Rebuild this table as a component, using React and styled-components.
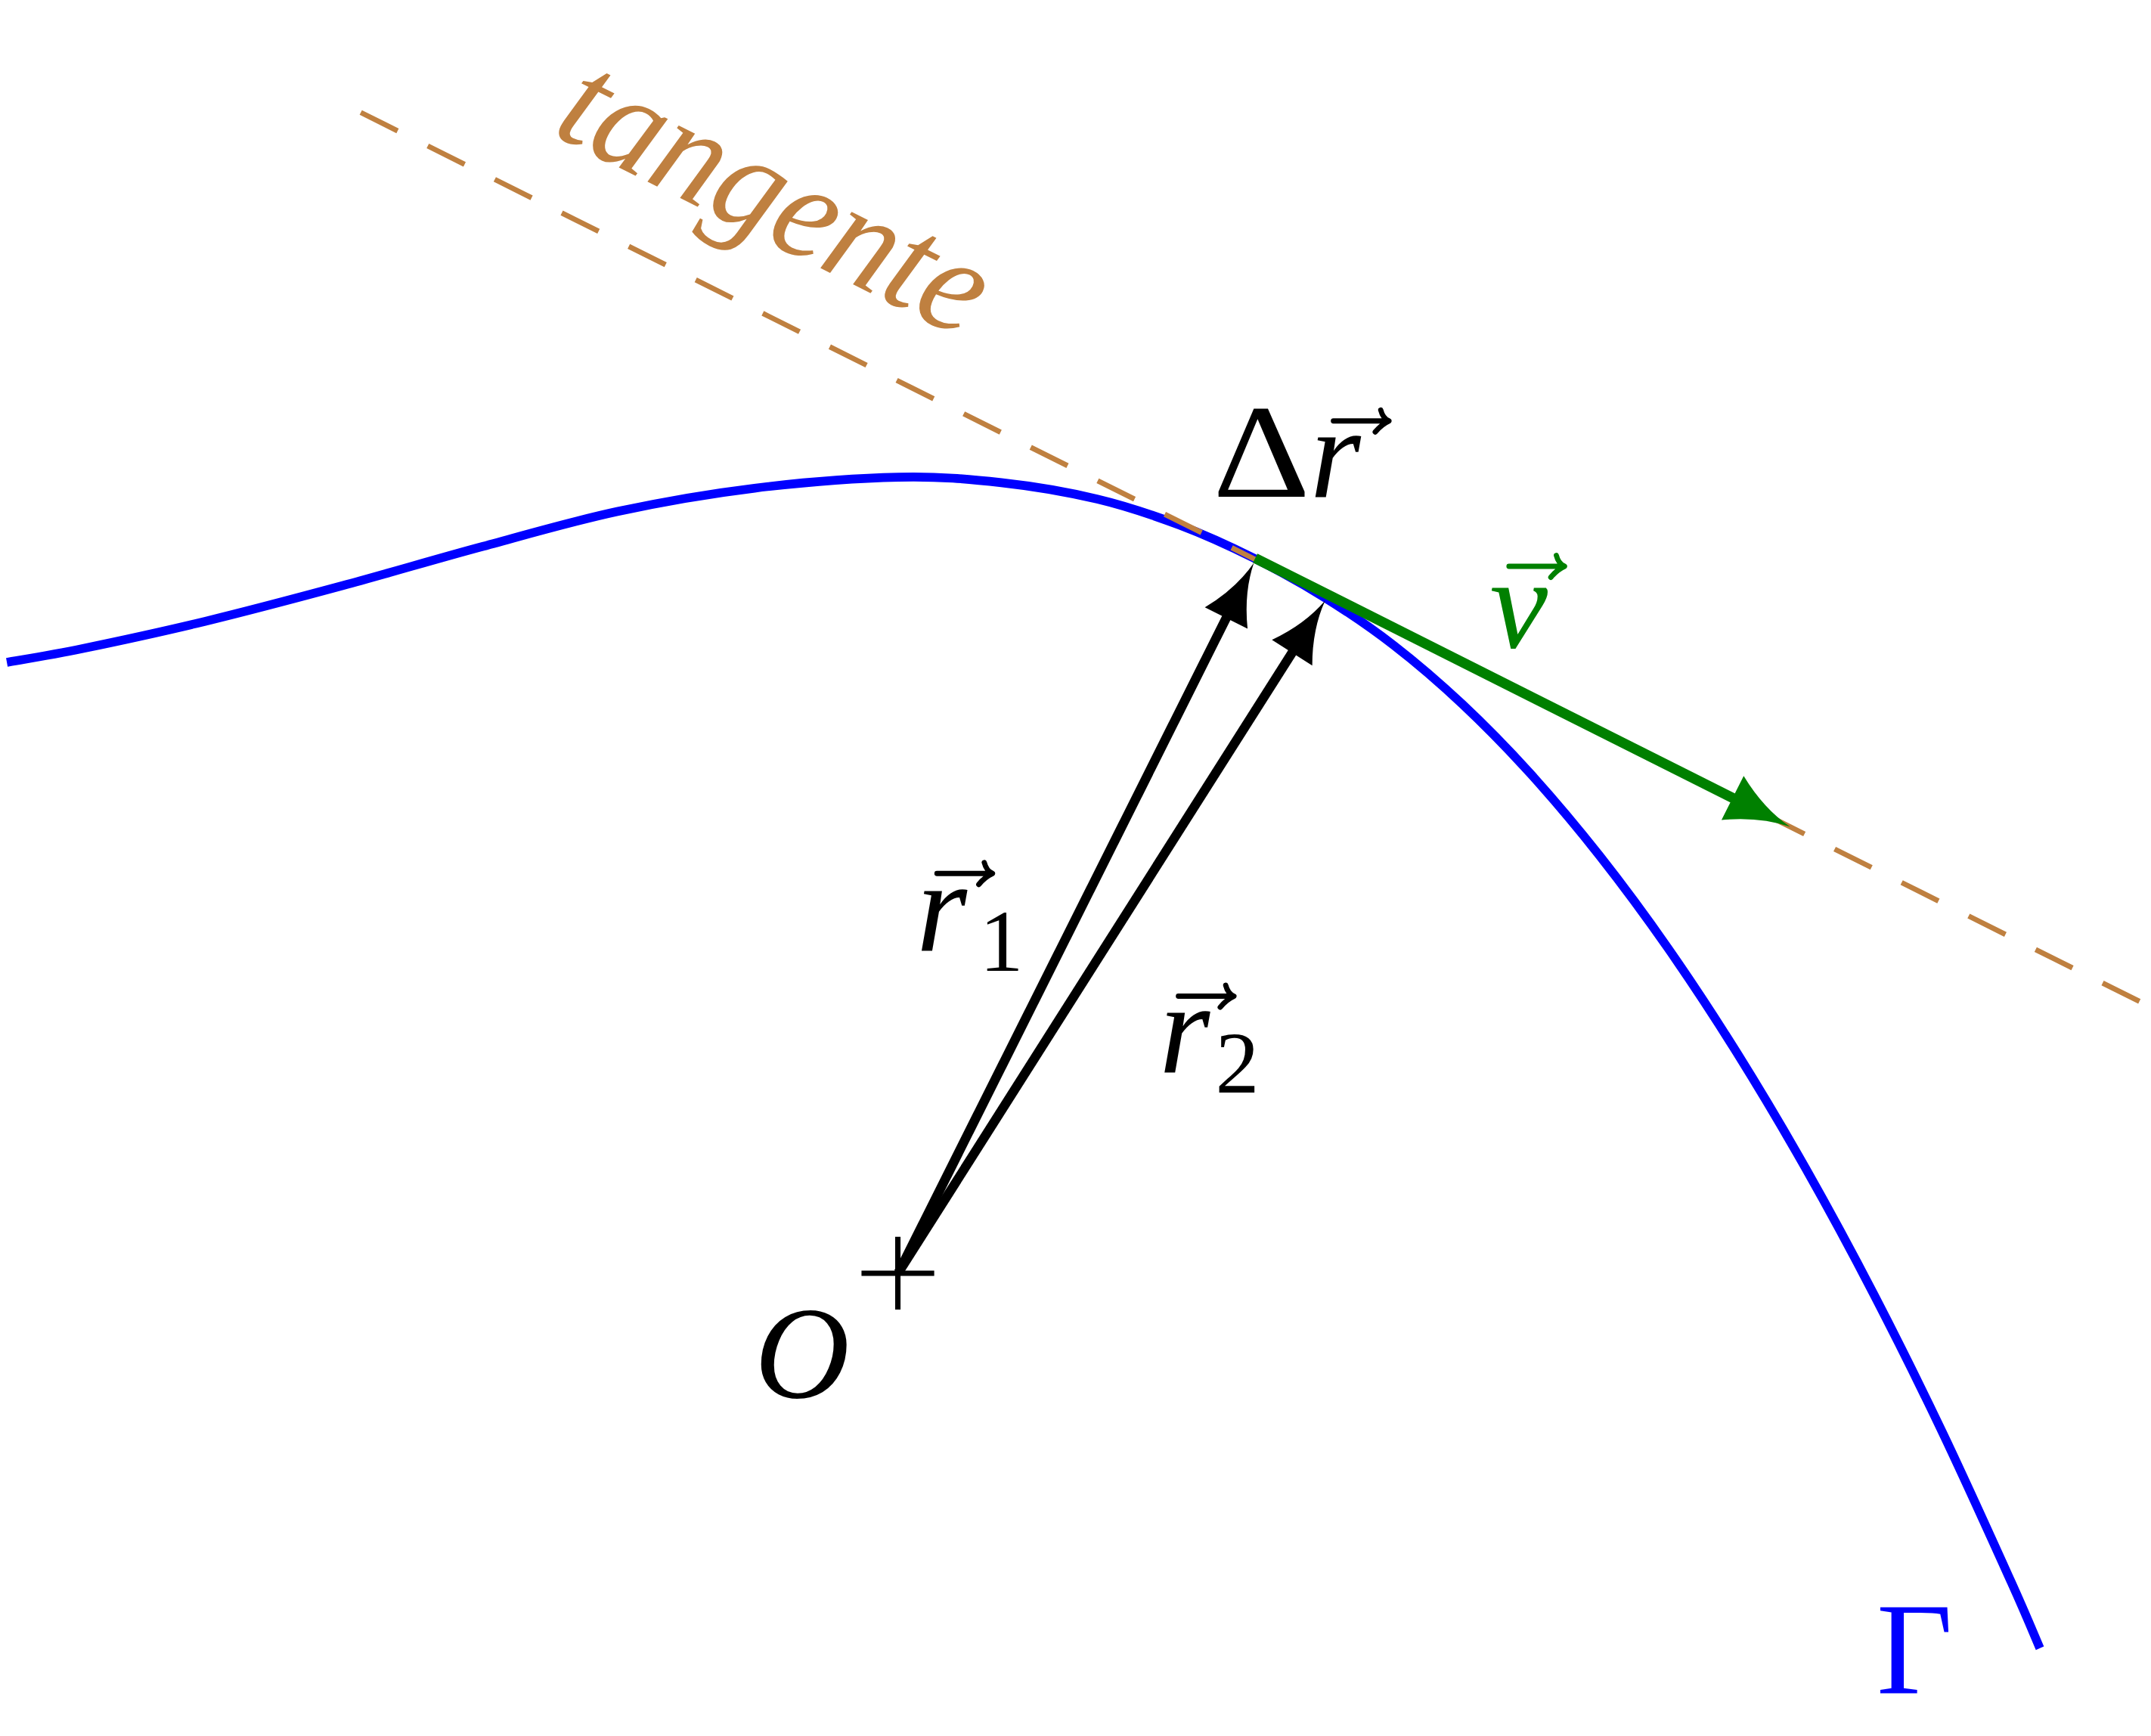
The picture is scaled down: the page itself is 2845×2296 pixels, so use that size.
import React from "react";
import styled, { createGlobalStyle } from "styled-components";

const GlobalStyle = createGlobalStyle`
  html, body {
    margin: 0;
    padding: 0;
    background: #ffffff;
  }
`;

const Figure = styled.div`
  width: 2845px;
  height: 2296px;
  overflow: hidden;
  background: #ffffff;
`;

const Canvas = styled.svg`
  display: block;
  width: 2845px;
  height: 2296px;
`;

const Stroke = styled.path`
  fill: none;
  stroke: ${(p) => p.$color};
  stroke-width: ${(p) => p.$width};
  stroke-linecap: butt;
  stroke-linejoin: round;
`;

const Dashed = styled.line`
  stroke: #bf8040;
  stroke-width: 3.8;
  stroke-dasharray: 30 24.6;
`;

const Head = styled.path`
  fill: ${(p) => p.$color};
  stroke: none;
`;

const Cross = styled.path`
  fill: none;
  stroke: #000;
  stroke-width: 3.9;
`;

const Accent = styled.path`
  fill: none;
  stroke: ${(p) => p.$color || "#000"};
  stroke-width: 3.8;
  stroke-linecap: round;
  stroke-linejoin: round;
`;

const Label = styled.text`
  font-family: "Liberation Serif", "DejaVu Serif", serif;
  font-style: ${(p) => (p.$upright ? "normal" : "italic")};
  font-size: ${(p) => p.$size || 95}px;
  fill: ${(p) => p.$color || "#000"};
`;

// points of the curve Γ, read off the figure
const gamma = [
  [5, 483], [60, 473], [150, 453], [250, 427], [350, 399], [450, 373],
  [550, 356], [655, 348], [730, 352], [800, 364], [860, 383], [914, 407],
  [966, 436], [1016, 470.6], [1066, 513.5], [1116, 564.6], [1166, 624],
  [1216, 691.6], [1266, 767.5], [1316, 851.6], [1366, 944],
  [1416, 1044.6], [1466, 1153.5], [1487, 1202],
];

function smoothPath(pts) {
  let d = `M${pts[0][0]},${pts[0][1]}`;
  for (let i = 0; i < pts.length - 1; i++) {
    const p0 = pts[i - 1] || pts[i];
    const p1 = pts[i];
    const p2 = pts[i + 1];
    const p3 = pts[i + 2] || p2;
    const c1 = [p1[0] + (p2[0] - p0[0]) / 6, p1[1] + (p2[1] - p0[1]) / 6];
    const c2 = [p2[0] - (p3[0] - p1[0]) / 6, p2[1] - (p3[1] - p1[1]) / 6];
    d += ` C${c1[0]},${c1[1]} ${c2[0]},${c2[1]} ${p2[0]},${p2[1]}`;
  }
  return d;
}

function unit(from, to) {
  const dx = to[0] - from[0];
  const dy = to[1] - from[1];
  const len = Math.hypot(dx, dy);
  return [dx / len, dy / len];
}

// concave-sided arrow tip, like the tikz stealth
function headPath(tip, dir, L, W) {
  const [dx, dy] = dir;
  const nx = -dy;
  const ny = dx;
  const pt = (a, b) =>
    `${tip[0] - a * dx + b * nx},${tip[1] - a * dy + b * ny}`;
  return `M${pt(0, 0)} Q${pt(0.5 * L, 0.18 * W)} ${pt(L, W)} L${pt(
    L,
    -W
  )} Q${pt(0.5 * L, -0.18 * W)} ${pt(0, 0)} Z`;
}

function Vector({ from, tip, color, width, L, W }) {
  const dir = unit(from, tip);
  const end = [tip[0] - dir[0] * L * 0.7, tip[1] - dir[1] * L * 0.7];
  return (
    <g>
      <Stroke
        $color={color}
        $width={width}
        d={`M${from[0]},${from[1]} L${end[0]},${end[1]}`}
      />
      <Head $color={color} d={headPath(tip, dir, L, W)} />
    </g>
  );
}

// the little arrow of \vec over a letter
function VecAccent({ x, y, w = 40, color }) {
  return (
    <Accent
      $color={color}
      d={`M${x},${y} H${x + w} M${x + w - 5.5},${y - 8} Q${x + w - 4},${
        y - 2
      } ${x + w + 0.5},${y} Q${x + w - 5},${y + 2.5} ${x + w - 9.5},${y + 8}`}
    />
  );
}

export default function App() {
  const O = [655, 928];
  return (
    <Figure>
      <GlobalStyle />
      <Canvas viewBox="0 0 1568 1266" preserveAspectRatio="none">
        <Stroke $color="#0000ff" $width={6.4} d={smoothPath(gamma)} />
        <Dashed x1={263} y1={82} x2={1600} y2={750.5} />

        <Vector
          from={[915, 407]}
          tip={[1305, 603]}
          color="#008000"
          width={7.4}
          L={47}
          W={18}
        />
        <Vector from={O} tip={[914, 410.5]} color="#000" width={6.8} L={45} W={17.4} />
        <Vector from={O} tip={[966, 438]} color="#000" width={6.8} L={45} W={17.4} />

        <Cross d="M628,928.5 H681 M654.5,902 V955" />

        <Label
          $color="#bf8040"
          $size={102}
          transform="translate(401,97) rotate(26.57)"
          textLength={336}
          lengthAdjust="spacingAndGlyphs"
        >
          tangente
        </Label>

        <Label $upright $size={97} transform="translate(884,362) scale(1.14,1)">
          Δ
        </Label>
        <Label x={955} y={362}>
          r
        </Label>
        <VecAccent x={972} y={307} />

        <Label $color="#008000" x={1086} y={472}>
          v
        </Label>
        <VecAccent x={1100} y={413} color="#008000" />

        <Label x={668} y={693}>
          r
        </Label>
        <Label $upright $size={64} x={714} y={708}>
          1
        </Label>
        <VecAccent x={683} y={637} />

        <Label x={845} y={782}>
          r
        </Label>
        <Label $upright $size={64} x={886} y={797}>
          2
        </Label>
        <VecAccent x={859} y={726.5} />

        <Label $size={96} x={550} y={1019}>
          O
        </Label>

        <Label $upright $color="#0000ff" $size={96} x={1368} y={1235}>
          Γ
        </Label>
      </Canvas>
    </Figure>
  );
}
